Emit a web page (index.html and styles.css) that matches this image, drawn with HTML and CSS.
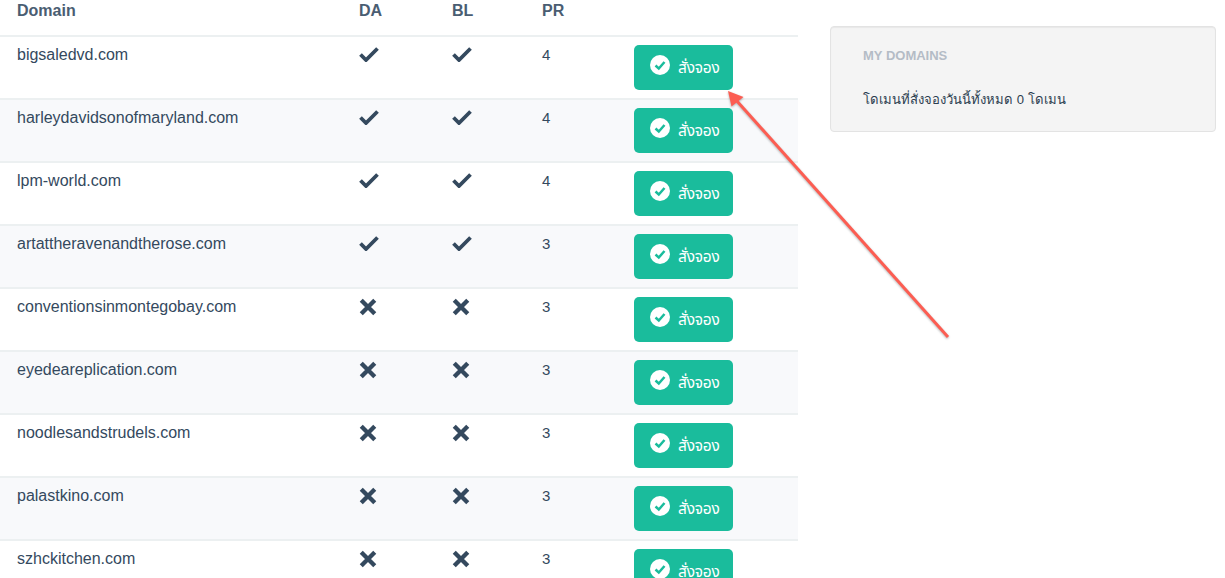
FILE: index.html
```html
<!DOCTYPE html>
<html lang="th">
<head>
<meta charset="utf-8">
<title>Domains</title>
<link rel="stylesheet" href="styles.css">
</head>
<body>
<main class="layout">
<section class="list">
<table class="domains">
<thead><tr><th class="c-name">Domain</th><th class="c-da">DA</th><th class="c-bl">BL</th><th class="c-pr">PR</th><th class="c-act"></th></tr></thead>
<tbody id="rows">
<tr><td>bigsaledvd.com</td><td><svg class="mark" viewBox="0 0 20 16"><path d="M1.5 8.5 7 14 18.500 2.500"/></svg></td><td><svg class="mark" viewBox="0 0 20 16"><path d="M1.5 8.500 7 14 18.500 2.500"/></svg></td><td class="pr">4</td><td><button class="book"><svg class="ok" viewBox="0 0 20 20"><circle cx="10" cy="10" r="10"/><path d="M5.500 10.500 8.800 13.500 14.500 7"/></svg><span class="book-label">สั่งจอง</span></button></td></tr>
<tr><td>harleydavidsonofmaryland.com</td><td><svg class="mark" viewBox="0 0 20 16"><path d="M1.5 8.5 7 14 18.500 2.500"/></svg></td><td><svg class="mark" viewBox="0 0 20 16"><path d="M1.5 8.500 7 14 18.500 2.500"/></svg></td><td class="pr">4</td><td><button class="book"><svg class="ok" viewBox="0 0 20 20"><circle cx="10" cy="10" r="10"/><path d="M5.500 10.500 8.800 13.500 14.500 7"/></svg><span class="book-label">สั่งจอง</span></button></td></tr>
<tr><td>lpm-world.com</td><td><svg class="mark" viewBox="0 0 20 16"><path d="M1.5 8.5 7 14 18.500 2.500"/></svg></td><td><svg class="mark" viewBox="0 0 20 16"><path d="M1.5 8.500 7 14 18.500 2.500"/></svg></td><td class="pr">4</td><td><button class="book"><svg class="ok" viewBox="0 0 20 20"><circle cx="10" cy="10" r="10"/><path d="M5.500 10.500 8.800 13.500 14.500 7"/></svg><span class="book-label">สั่งจอง</span></button></td></tr>
<tr><td>artattheravenandtherose.com</td><td><svg class="mark" viewBox="0 0 20 16"><path d="M1.5 8.5 7 14 18.500 2.500"/></svg></td><td><svg class="mark" viewBox="0 0 20 16"><path d="M1.5 8.500 7 14 18.500 2.500"/></svg></td><td class="pr">3</td><td><button class="book"><svg class="ok" viewBox="0 0 20 20"><circle cx="10" cy="10" r="10"/><path d="M5.500 10.500 8.800 13.500 14.500 7"/></svg><span class="book-label">สั่งจอง</span></button></td></tr>
<tr><td>conventionsinmontegobay.com</td><td><svg class="mark cross" viewBox="0 0 16 16"><path d="M2 2 14 14M14 2 2 14"/></svg></td><td><svg class="mark cross" viewBox="0 0 16 16"><path d="M2 2 14 14M14 2 2 14"/></svg></td><td class="pr">3</td><td><button class="book"><svg class="ok" viewBox="0 0 20 20"><circle cx="10" cy="10" r="10"/><path d="M5.500 10.500 8.800 13.500 14.500 7"/></svg><span class="book-label">สั่งจอง</span></button></td></tr>
<tr><td>eyedeareplication.com</td><td><svg class="mark cross" viewBox="0 0 16 16"><path d="M2 2 14 14M14 2 2 14"/></svg></td><td><svg class="mark cross" viewBox="0 0 16 16"><path d="M2 2 14 14M14 2 2 14"/></svg></td><td class="pr">3</td><td><button class="book"><svg class="ok" viewBox="0 0 20 20"><circle cx="10" cy="10" r="10"/><path d="M5.500 10.500 8.800 13.500 14.500 7"/></svg><span class="book-label">สั่งจอง</span></button></td></tr>
<tr><td>noodlesandstrudels.com</td><td><svg class="mark cross" viewBox="0 0 16 16"><path d="M2 2 14 14M14 2 2 14"/></svg></td><td><svg class="mark cross" viewBox="0 0 16 16"><path d="M2 2 14 14M14 2 2 14"/></svg></td><td class="pr">3</td><td><button class="book"><svg class="ok" viewBox="0 0 20 20"><circle cx="10" cy="10" r="10"/><path d="M5.500 10.500 8.800 13.500 14.500 7"/></svg><span class="book-label">สั่งจอง</span></button></td></tr>
<tr><td>palastkino.com</td><td><svg class="mark cross" viewBox="0 0 16 16"><path d="M2 2 14 14M14 2 2 14"/></svg></td><td><svg class="mark cross" viewBox="0 0 16 16"><path d="M2 2 14 14M14 2 2 14"/></svg></td><td class="pr">3</td><td><button class="book"><svg class="ok" viewBox="0 0 20 20"><circle cx="10" cy="10" r="10"/><path d="M5.500 10.500 8.800 13.500 14.500 7"/></svg><span class="book-label">สั่งจอง</span></button></td></tr>
<tr><td>szhckitchen.com</td><td><svg class="mark cross" viewBox="0 0 16 16"><path d="M2 2 14 14M14 2 2 14"/></svg></td><td><svg class="mark cross" viewBox="0 0 16 16"><path d="M2 2 14 14M14 2 2 14"/></svg></td><td class="pr">3</td><td><button class="book"><svg class="ok" viewBox="0 0 20 20"><circle cx="10" cy="10" r="10"/><path d="M5.500 10.500 8.800 13.500 14.500 7"/></svg><span class="book-label">สั่งจอง</span></button></td></tr>
</tbody>
</table>
</section>
<aside class="panel">
<h2 class="panel-title">MY DOMAINS</h2>
<p class="panel-text">โดเมนที่สั่งจองวันนี้ทั้งหมด 0 โดเมน</p>
</aside>
</main>
<svg class="arrow" viewBox="0 0 1225 578" width="1225" height="578">
<path class="arrow-line" d="M948 337 736 100"/>
<path class="arrow-head" d="M728 91 743.500 97 731.500 106.500Z"/>
</svg>
</body>
</html>
```
FILE: styles.css
```css
html, body { margin: 0; padding: 0; height: 578px; overflow: hidden; background: #fff; }
body { font-family: "Liberation Sans", Arial, "Noto Sans", sans-serif; color: #34495e; font-size: 16px; position: relative; }
.layout { display: flex; align-items: flex-start; }
.list { width: 798px; flex: none; }
.domains { width: 798px; border-collapse: separate; border-spacing: 0; table-layout: fixed; }
.domains th { box-sizing: border-box; padding: 1px 0 0; text-align: left; vertical-align: top; font-size: 16px; font-weight: 700; color: #4a5d72; border-bottom: 2px solid #ecf0f1; height: 37px; line-height: 20px; }
.domains th.c-name { width: 359px; padding-left: 17px; }
.c-da { width: 93px; }
.c-bl { width: 90px; }
.c-pr { width: 92px; }
.domains td { height: 63px; box-sizing: border-box; padding: 8px 0 0; vertical-align: top; line-height: 20px; border-bottom: 2px solid #ecf0f1; font-size: 16px; }
.domains td:first-child { padding-left: 17px; }
.domains td.pr { font-size: 15px; line-height: 20px; }
.domains tbody tr:nth-child(even) td { background: #f8f9fb; }
.mark { display: block; width: 20px; height: 16px; fill: none; stroke: #34495e; stroke-width: 3.800; margin-top: 1px; }
.cross { width: 18px; height: 18px; margin-left: 0; stroke-width: 3.800; }
.book { display: flex; align-items: center; width: 99px; height: 45px; padding: 0 0 0 16px; border: 0; border-radius: 5px; background: #1abc9c; color: #fff; font: 15.500px "Noto Sans Thai", "Noto Sans", "DejaVu Sans", sans-serif; letter-spacing: -0.200px; }
.book-label { padding-top: 2px; }
.ok { width: 20px; height: 20px; margin-right: 8px; margin-top: -6px; }
.ok circle { fill: #fff; }
.ok path { fill: none; stroke: #1abc9c; stroke-width: 2.500; }
.panel { box-sizing: border-box; width: 386px; height: 106px; margin: 26px 0 0 32px; padding: 21px 32px; background: #f4f4f4; border: 1px solid #e3e3e3; border-radius: 4px; box-shadow: inset 0 1px 1px rgba(0,0,0,.05); }
.panel-title { margin: 0; font-size: 13px; line-height: 16px; font-weight: 700; color: #b4bcc6; }
.panel-text { margin: 24px 0 0; font-size: 13.100px; line-height: 24px; color: #2c3e50; }
.arrow { position: absolute; left: 0; top: 0; pointer-events: none; filter: drop-shadow(0 1px 1px rgba(0,0,0,.3)); }
.arrow-line { fill: none; stroke: #fc5d52; stroke-width: 3; }
.arrow-head { fill: #fc5d52; }
```
